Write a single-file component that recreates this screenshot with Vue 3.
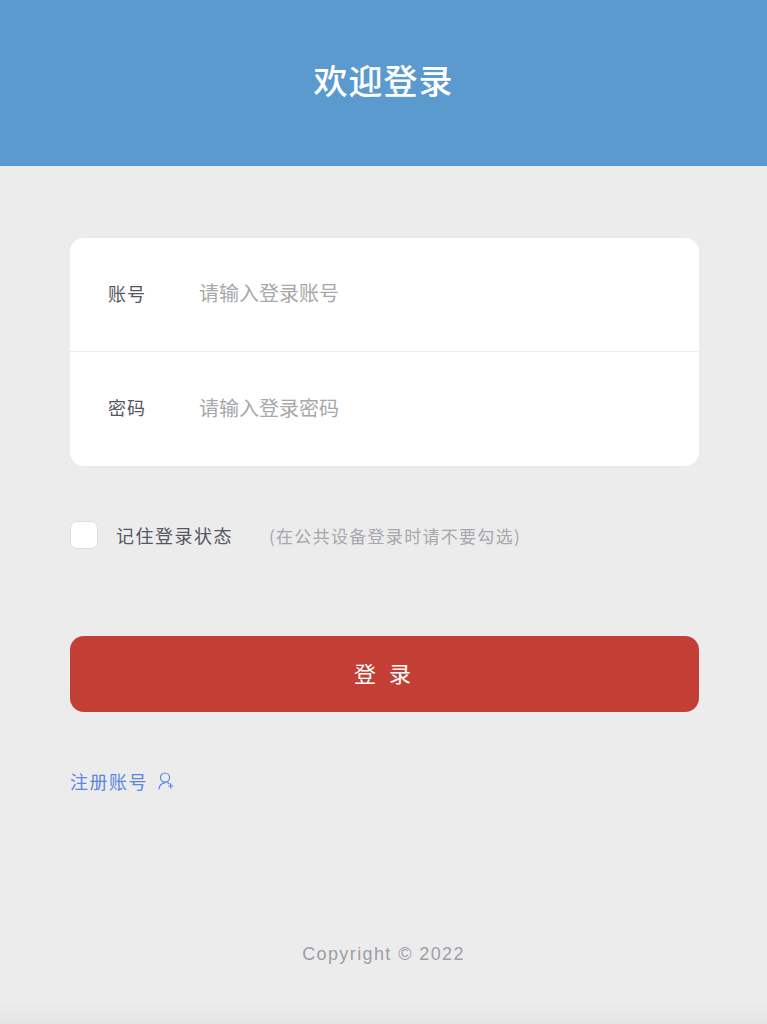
<template>
  <div class="login-page">
    <header class="login-header">
      <h1 class="login-title">欢迎登录</h1>
    </header>

    <main class="login-main">
      <form class="login-form" @submit.prevent>
        <label v-for="field in fields" :key="field.label" class="form-row">
          <span class="form-label">{{ field.label }}</span>
          <input class="form-input" :type="field.inputType" :placeholder="field.placeholder" />
        </label>
      </form>

      <div class="remember">
        <span class="remember-box"></span>
        <span class="remember-text">记住登录状态</span>
        <span class="remember-tip">(在公共设备登录时请不要勾选)</span>
      </div>

      <button class="login-btn" type="button">登 录</button>

      <a class="register" href="#">
        <span>注册账号</span>
        <svg class="register-icon" width="16" height="18" viewBox="0 0 16 18" fill="none" stroke="currentColor" stroke-width="1.2" stroke-linecap="round">
          <circle cx="7" cy="5.6" r="4.6" />
          <path d="M1 16.8c.3-3.1 2.6-5.5 6-6.2" />
          <path d="M9.8 10.9c.5.2.9.5 1.3.8" />
          <path d="M10.6 14h4.2M12.7 11.9v4.2" />
        </svg>
      </a>
    </main>

    <footer class="login-footer">Copyright © 2022</footer>
  </div>
</template>

<script setup>
const fields = [
  { label: '账号', inputType: 'text', placeholder: '请输入登录账号' },
  { label: '密码', inputType: 'text', placeholder: '请输入登录密码' },
]
</script>

<style>
html, body {
  margin: 0;
  background: #ececec;
}
</style>

<style scoped>
.login-page {
  display: flex;
  flex-direction: column;
  height: 1024px;
  overflow: hidden;
  background: linear-gradient(to bottom, #ececec 0, #ececec 1000px, #e5e5e5 1024px);
  font-family: "Noto Sans CJK SC", "Liberation Sans", sans-serif;
}

.login-header {
  display: flex;
  justify-content: center;
  height: 166px;
  padding-top: 58px;
  box-sizing: border-box;
  background: #5b9acf;
}

.login-title {
  margin: 0;
  font-size: 34px;
  line-height: 44px;
  letter-spacing: 1px;
  font-weight: 500;
  color: #fff;
}

.login-main {
  display: flex;
  flex-direction: column;
  flex: 1;
  padding: 72px 68px 0 70px;
}

.login-form {
  background: #fff;
  border-radius: 14px;
}

.form-row {
  display: flex;
  align-items: center;
  box-sizing: border-box;
  height: 113px;
  padding: 0 0 4px 38px;
}

.form-row + .form-row {
  height: 115px;
  border-top: 1px solid #eeeef2;
}

.form-label {
  width: 91px;
  font-size: 18px;
  letter-spacing: 1px;
  line-height: 24px;
  color: #55565f;
}

.form-input {
  flex: 1;
  min-width: 0;
  height: 28px;
  border: 0;
  outline: 0;
  padding: 0;
  background: none;
  font: inherit;
  font-size: 20px;
}

.form-input::placeholder {
  color: #a8a8a8;
}

.remember {
  display: flex;
  align-items: center;
  margin-top: 55px;
  height: 28px;
}

.remember-box {
  width: 28px;
  height: 28px;
  box-sizing: border-box;
  border: 1px solid #d6dfe4;
  border-radius: 7px;
  background: #fff;
}

.remember-text {
  margin-left: 18px;
  font-size: 18px;
  letter-spacing: 1.5px;
  color: #55565f;
}

.remember-tip {
  margin-left: 36px;
  font-size: 17px;
  letter-spacing: 1.3px;
  color: #a6a7ab;
}

.login-btn {
  height: 76px;
  margin-top: 87px;
  padding: 0 0 4px;
  border: 0;
  border-radius: 14px;
  background: #c33f35;
  color: #fff;
  font: inherit;
  font-size: 22px;
  letter-spacing: 4px;
}

.register {
  display: flex;
  align-items: center;
  align-self: flex-start;
  gap: 10px;
  margin-top: 57px;
  font-size: 18px;
  letter-spacing: 1.5px;
  line-height: 24px;
  color: #5b86e0;
  text-decoration: none;
}

.login-footer {
  padding-bottom: 58px;
  text-align: center;
  font-family: "Liberation Sans", sans-serif;
  font-size: 18px;
  line-height: 24px;
  letter-spacing: 1.4px;
  color: #9c9ea6;
}
</style>
